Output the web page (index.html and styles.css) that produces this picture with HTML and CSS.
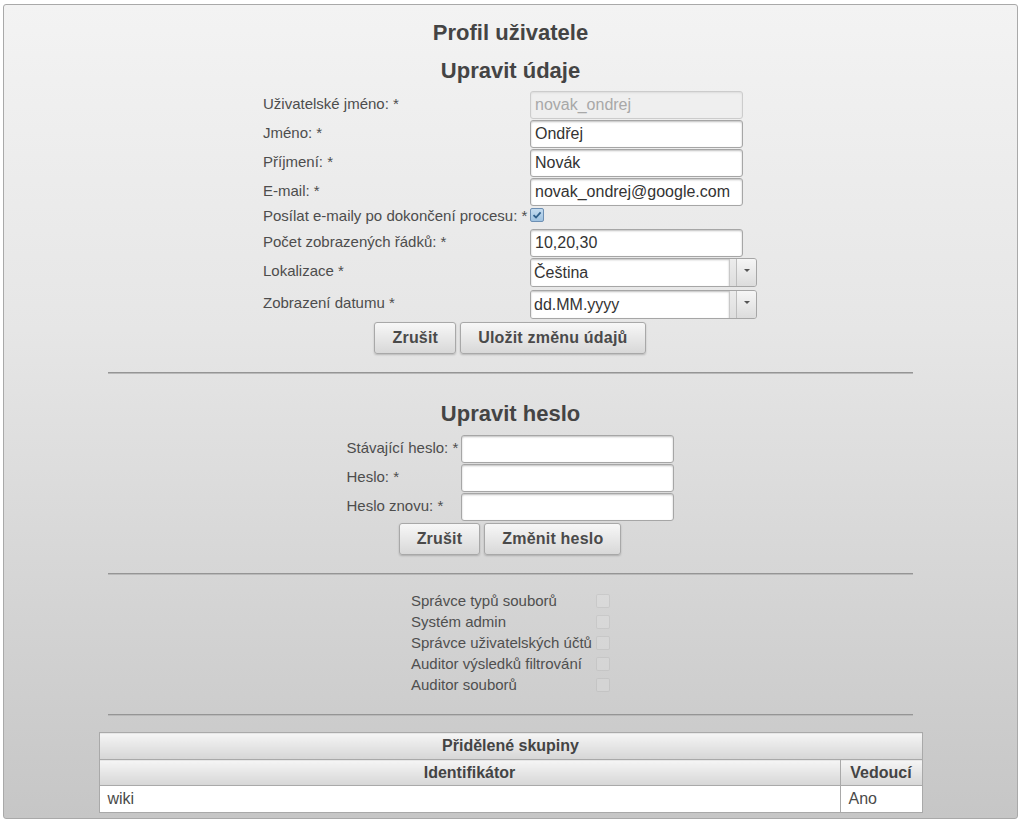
FILE: index.html
```html
<!DOCTYPE html>
<html lang="cs">
<head>
<meta charset="utf-8">
<title>Profil uživatele</title>
<link rel="stylesheet" href="styles.css">
</head>
<body>
<div class="panel">
  <h1 class="title">Profil uživatele</h1>
  <h2 class="subtitle">Upravit údaje</h2>

  <div class="form form-main">
    <div class="row">
      <label class="lbl">Uživatelské jméno: *</label>
      <input class="txt" type="text" value="novak_ondrej" disabled>
    </div>
    <div class="row">
      <label class="lbl">Jméno: *</label>
      <input class="txt" type="text" value="Ondřej">
    </div>
    <div class="row">
      <label class="lbl">Příjmení: *</label>
      <input class="txt" type="text" value="Novák">
    </div>
    <div class="row">
      <label class="lbl">E-mail: *</label>
      <input class="txt" type="text" value="novak_ondrej@google.com">
    </div>
    <div class="row row-cb">
      <label class="lbl lbl-cb">Posílat e-maily po dokončení procesu: *</label>
      <span class="cb cb-checked">
        <svg width="10" height="10" viewBox="0 0 10 10"><path d="M1.5 5.2 L4 7.5 L8.6 2.4" fill="none" stroke="#2f5f8a" stroke-width="1.8"/></svg>
      </span>
    </div>
    <div class="row">
      <label class="lbl">Počet zobrazených řádků: *</label>
      <input class="txt" type="text" value="10,20,30">
    </div>
    <div class="row row-sel">
      <label class="lbl">Lokalizace *</label>
      <div class="sel">
        <span class="sel-label">Čeština</span>
        <span class="sel-gap"></span>
        <span class="sel-trigger"><span class="arrow"></span></span>
      </div>
    </div>
    <div class="row row-sel">
      <label class="lbl">Zobrazení datumu *</label>
      <div class="sel">
        <span class="sel-label">dd.MM.yyyy</span>
        <span class="sel-gap"></span>
        <span class="sel-trigger"><span class="arrow"></span></span>
      </div>
    </div>
    <div class="buttons">
      <button class="btn" type="button">Zrušit</button>
      <button class="btn" type="button">Uložit změnu údajů</button>
    </div>
  </div>

  <div class="sep sep-1"></div>

  <h2 class="subtitle subtitle-pw">Upravit heslo</h2>
  <div class="form form-pw">
    <div class="row">
      <label class="lbl">Stávající heslo: *</label>
      <input class="txt" type="password">
    </div>
    <div class="row">
      <label class="lbl">Heslo: *</label>
      <input class="txt" type="password">
    </div>
    <div class="row">
      <label class="lbl">Heslo znovu: *</label>
      <input class="txt" type="password">
    </div>
    <div class="buttons buttons-pw">
      <button class="btn" type="button">Zrušit</button>
      <button class="btn" type="button">Změnit heslo</button>
    </div>
  </div>

  <div class="sep sep-2"></div>

  <div class="roles">
    <div class="role"><span class="role-name">Správce typů souborů</span><span class="cb cb-off"></span></div>
    <div class="role"><span class="role-name">Systém admin</span><span class="cb cb-off"></span></div>
    <div class="role"><span class="role-name">Správce uživatelských účtů</span><span class="cb cb-off"></span></div>
    <div class="role"><span class="role-name">Auditor výsledků filtrování</span><span class="cb cb-off"></span></div>
    <div class="role"><span class="role-name">Auditor souborů</span><span class="cb cb-off"></span></div>
  </div>

  <div class="sep sep-3"></div>

  <table class="groups">
    <thead>
      <tr><th class="gh" colspan="2">Přidělené skupiny</th></tr>
      <tr><th class="ch">Identifikátor</th><th class="ch ch-2">Vedoucí</th></tr>
    </thead>
    <tbody>
      <tr><td class="cell">wiki</td><td class="cell">Ano</td></tr>
    </tbody>
  </table>
</div>
</body>
</html>
```

FILE: styles.css
```css
html, body {
  margin: 0;
  padding: 0;
  background: #ffffff;
}

body {
  padding: 4px 5px 0 3px;
  font-family: "Liberation Sans", Arial, sans-serif;
  color: #4a4a4a;
}

.panel {
  box-sizing: border-box;
  width: 1015px;
  border: 1px solid #a9a9a9;
  border-radius: 3px;
  background: linear-gradient(#f3f3f3 0%, #e6e6e6 40%, #c6c6c6 100%);
  padding: 15px 0 5px 0;
  display: flex;
  flex-direction: column;
  align-items: center;
}

.title,
.subtitle {
  margin: 0;
  font-size: 22px;
  line-height: 26px;
  font-weight: bold;
  color: #444444;
  text-align: center;
}

.subtitle {
  margin-top: 12px;
}

.subtitle-pw {
  margin-top: 27px;
}

.form {
  display: flex;
  flex-direction: column;
}

.form-main {
  width: 494px;
  margin-top: 7px;
  margin-left: -1px;
}

.form-pw {
  width: 327px;
  margin-top: 8px;
  margin-left: -1px;
}

.row {
  display: flex;
  align-items: center;
  margin-bottom: 1px;
}

.row-sel {
  margin-bottom: 3px;
}

.lbl {
  font-size: 15px;
  line-height: 18px;
  color: #4d4d4d;
  padding-bottom: 3px;
  white-space: nowrap;
}

.form-main .lbl {
  width: 267px;
}

.form-pw .lbl {
  width: 114px;
}

.row-cb {
  align-items: flex-start;
  height: 21px;
}

.lbl-cb {
  padding-bottom: 0;
}

.txt {
  box-sizing: border-box;
  width: 213px;
  height: 28px;
  margin: 0;
  padding: 0 4px;
  border: 1px solid #a6a6a6;
  border-radius: 3px;
  background: #ffffff;
  box-shadow: inset 0 1px 2px rgba(0, 0, 0, 0.25);
  font-family: "Liberation Sans", Arial, sans-serif;
  font-size: 16px;
  color: #333333;
  outline: none;
}

.txt:disabled {
  background: #efefef;
  border-color: #cccccc;
  color: #a8a8a8;
  box-shadow: inset 0 1px 2px rgba(0, 0, 0, 0.08);
}

.cb {
  box-sizing: border-box;
  width: 14px;
  height: 14px;
  display: inline-flex;
  align-items: center;
  justify-content: center;
  border-radius: 2px;
}

.cb-checked {
  margin-top: 1px;
  border: 1px solid #6d8fb3;
  background: linear-gradient(#c3dbef, #9fc2e0);
}

.cb-off {
  border: 1px solid rgba(0, 0, 0, 0.07);
  background: rgba(255, 255, 255, 0.12);
}

.sel {
  box-sizing: border-box;
  width: 227px;
  height: 29px;
  display: flex;
  border: 1px solid #a6a6a6;
  border-radius: 3px;
  background: #e8e8e8;
  box-shadow: inset 0 1px 2px rgba(0, 0, 0, 0.2);
  overflow: hidden;
}

.sel-label {
  flex: 1;
  background: #ffffff;
  border-right: 1px solid #c8c8c8;
  box-shadow: inset 0 1px 2px rgba(0, 0, 0, 0.25);
  padding: 0 3px;
  font-size: 16px;
  line-height: 27px;
  color: #333333;
}

.sel-gap {
  width: 6px;
  background: linear-gradient(#ececec, #dedede);
  border-right: 1px solid #bdbdbd;
}

.sel-trigger {
  width: 19px;
  display: flex;
  align-items: center;
  justify-content: center;
  background: linear-gradient(#f6f6f6, #dcdcdc);
}

.arrow {
  width: 0;
  height: 0;
  border-left: 3px solid transparent;
  border-right: 3px solid transparent;
  border-top: 3px solid #555555;
  margin-top: -4px;
}

.buttons {
  display: flex;
  justify-content: center;
  gap: 4px;
}

.buttons-pw {
  margin-top: 1px;
}

.btn {
  box-sizing: border-box;
  height: 32px;
  margin: 0;
  padding: 0 17px;
  border: 1px solid #a8a8a8;
  border-radius: 3px;
  background: linear-gradient(#f7f7f7, #d8d8d8);
  box-shadow: 0 1px 2px rgba(0, 0, 0, 0.2);
  font-family: "Liberation Sans", Arial, sans-serif;
  font-size: 16px;
  font-weight: bold;
  letter-spacing: 0.2px;
  color: #4a4a4a;
}

.sep {
  width: 805px;
  height: 0;
  border-top: 1px solid #959595;
  border-bottom: 1px solid #b9b9b9;
}

.sep-1 {
  margin-top: 18px;
}

.sep-2 {
  margin-top: 18px;
}

.sep-3 {
  margin-top: 19px;
}

.roles {
  margin-top: 15px;
  display: flex;
  flex-direction: column;
}

.role {
  display: flex;
  align-items: center;
  height: 21px;
}

.role-name {
  width: 185px;
  font-size: 15px;
  line-height: 21px;
  color: #4f4f4f;
  white-space: nowrap;
}

.groups {
  margin-top: 16px;
  width: 824px;
  border-collapse: collapse;
  font-size: 16px;
}

.groups th,
.groups td {
  border: 1px solid #a9a9a9;
  padding: 0 8px;
}

.gh,
.ch {
  height: 25px;
  background: linear-gradient(#f5f5f5, #d6d6d6);
  font-weight: bold;
  color: #444444;
  text-align: center;
}

.gh {
  height: 26px;
}

.ch-2 {
  width: 65px;
}

.cell {
  height: 26px;
  background: #ffffff;
  color: #4a4a4a;
  text-align: left;
}
```
